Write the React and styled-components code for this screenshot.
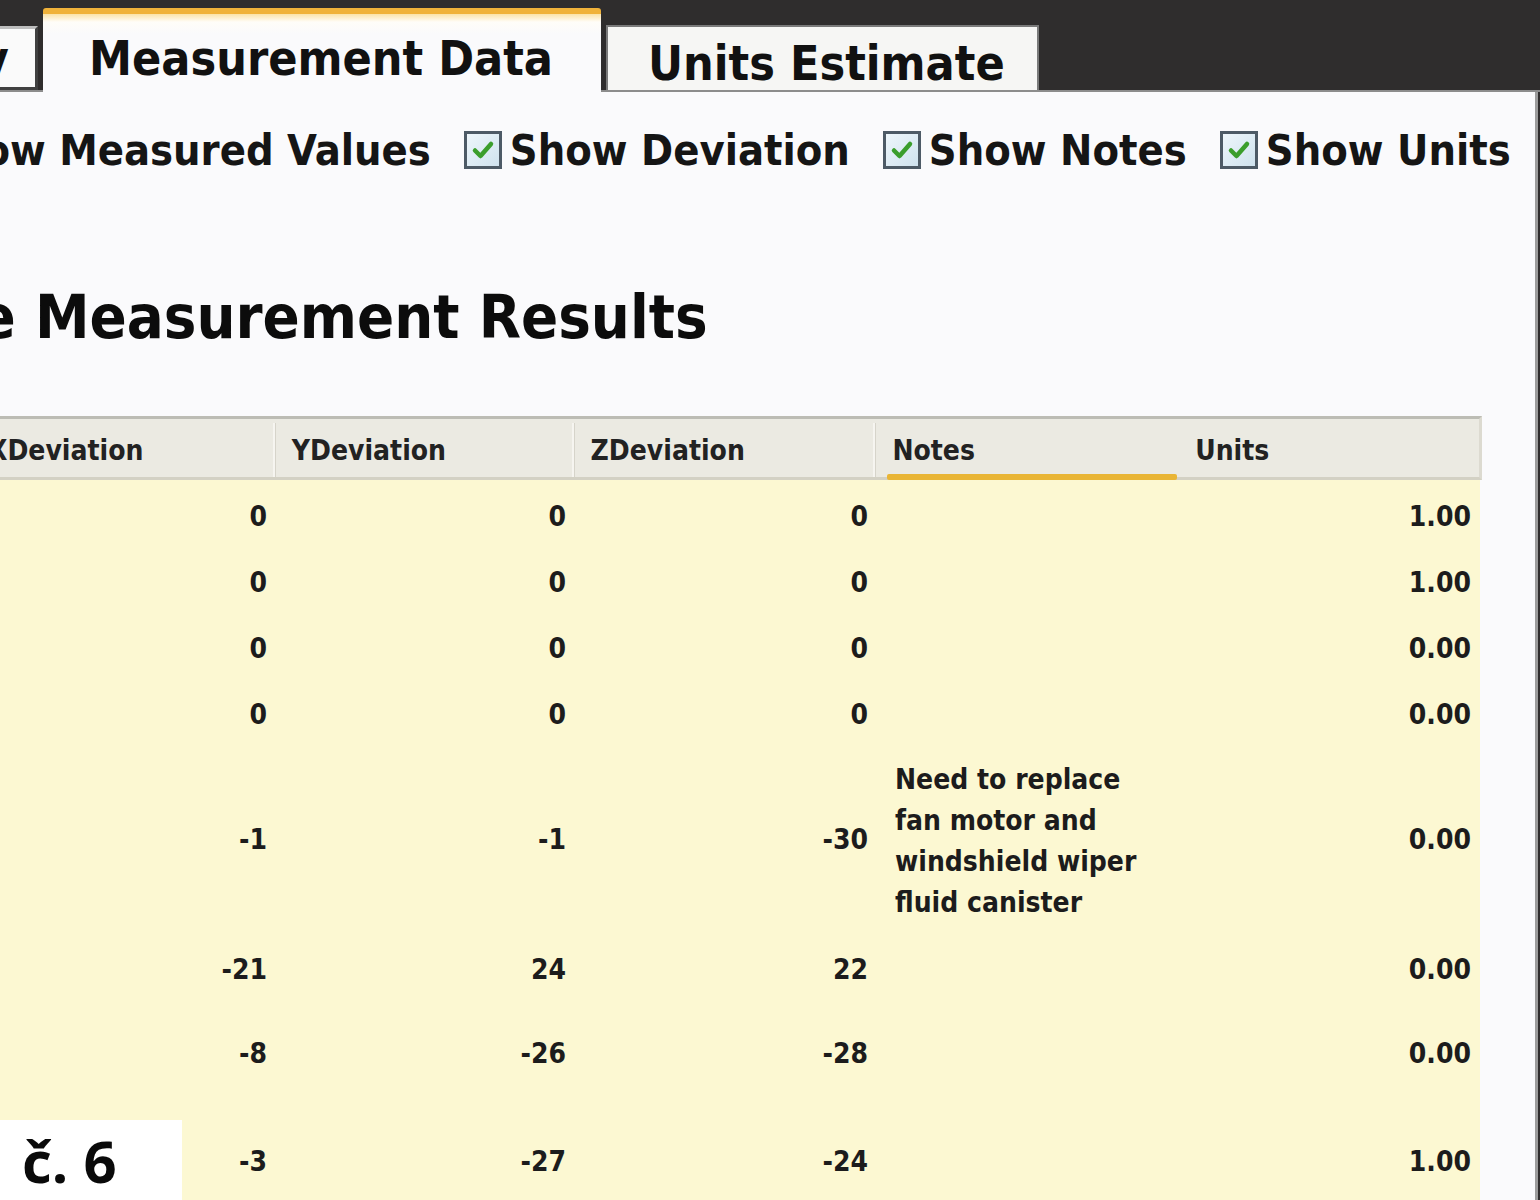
import React from 'react';
import styled, { createGlobalStyle, css } from 'styled-components';

const FONT = `"DejaVu Sans Condensed", "DejaVu Sans", "Liberation Sans", sans-serif`;

const columns = [
  { key: 'x', title: 'XDeviation', width: 304, align: 'right' },
  { key: 'y', title: 'YDeviation', width: 299, align: 'right' },
  { key: 'z', title: 'ZDeviation', width: 302, align: 'right' },
  { key: 'notes', title: 'Notes', width: 303, align: 'left', sorted: true },
  { key: 'units', title: 'Units', width: 300, align: 'right' },
];

const rows = [
  { x: '0', y: '0', z: '0', notes: '', units: '1.00', h: 66 },
  { x: '0', y: '0', z: '0', notes: '', units: '1.00', h: 66 },
  { x: '0', y: '0', z: '0', notes: '', units: '0.00', h: 66 },
  { x: '0', y: '0', z: '0', notes: '', units: '0.00', h: 66 },
  {
    x: '-1', y: '-1', z: '-30',
    notes: 'Need to replace fan motor and windshield wiper fluid canister',
    units: '0.00', h: 184,
  },
  { x: '-21', y: '24', z: '22', notes: '', units: '0.00', h: 76 },
  { x: '-8', y: '-26', z: '-28', notes: '', units: '0.00', h: 92 },
  { x: '-3', y: '-27', z: '-24', notes: '', units: '1.00', h: 124 },
];

const options = ['Show Measured Values', 'Show Deviation', 'Show Notes', 'Show Units'];

function CheckBox() {
  return (
    <StyledCheck>
      <svg width="28" height="28" viewBox="0 0 28 28">
        <path d="M6 14.5 L11.5 20 L22 8" fill="none" stroke="#3b9e2c" strokeWidth="4.5" strokeLinecap="round" strokeLinejoin="round" />
      </svg>
    </StyledCheck>
  );
}

export default function App() {
  return (
    <Screen>
      <GlobalStyle />
      <TabStrip>
        <Tab $clipped>Summary</Tab>
        <Tab $active>Measurement Data</Tab>
        <Tab>Units Estimate</Tab>
      </TabStrip>
      <Panel>
        <Options>
          {options.map((label) => (
            <Option key={label}>
              <CheckBox />
              {label}
            </Option>
          ))}
        </Options>
        <Title>Vehicle Measurement Results</Title>
        <Grid>
          <HeaderRow>
            {columns.map((col) => (
              <HeaderCell key={col.key} $width={col.width} $sorted={col.sorted}>
                {col.title}
              </HeaderCell>
            ))}
          </HeaderRow>
          {rows.map((row, i) => (
            <Row key={i} $height={row.h}>
              {columns.map((col) => (
                <Cell key={col.key} $width={col.width} $align={col.align} $notes={col.key === 'notes'}>
                  {row[col.key]}
                </Cell>
              ))}
            </Row>
          ))}
        </Grid>
      </Panel>
      <PageLabel>č. 6</PageLabel>
    </Screen>
  );
}

const GlobalStyle = createGlobalStyle`
  html, body {
    margin: 0;
    padding: 0;
    background: #fafafc;
    overflow: hidden;
  }
`;

const Screen = styled.div`
  position: relative;
  width: 1540px;
  height: 1200px;
  overflow: hidden;
  background: #2f2d2d;
  font-family: ${FONT};
  color: #151515;
`;

const TabStrip = styled.div`
  display: flex;
  align-items: flex-end;
  gap: 4px;
  height: 90px;
  border-bottom: 2px solid #8c8c8c;
`;

const Tab = styled.div`
  display: flex;
  align-items: center;
  box-sizing: border-box;
  font-weight: 700;
  font-size: 48px;
  white-space: nowrap;
  color: #111;
  height: 65px;
  padding: 8px 32px 0 40px;
  background: #f6f6f4;
  border: 2px solid #7a7a7a;
  border-bottom: none;
  margin-left: 1px;

  ${(p) => p.$clipped && css`
    width: 38px;
    margin-left: 0;
    height: 64px;
    padding: 0 26px 0 0;
    justify-content: flex-end;
    overflow: hidden;
    background: #fafafa;
    border: 3px solid #404040;
    border-left: none;
    border-top-color: #bdbdbd;
  `}

  ${(p) => p.$active && css`
    height: 84px;
    margin-bottom: -2px;
    padding: 10px 48px 0 46px;
    background: linear-gradient(#fbe3a8 0, #fffdf8 8px, #fafafc 20px);
    border: none;
    border-top: 6px solid #f0b23a;
    border-radius: 3px 3px 0 0;
  `}
`;

const Panel = styled.div`
  box-sizing: border-box;
  width: 1538px;
  height: 1108px;
  padding-top: 33px;
  background: #fafafc;
  border-right: 3px solid #9c9c9c;
  overflow: hidden;
`;

const Options = styled.div`
  display: flex;
  align-items: center;
  gap: 33px;
  height: 50px;
  margin-left: -118px;
`;

const Option = styled.label`
  display: flex;
  align-items: center;
  gap: 8px;
  font-size: 43px;
  font-weight: 700;
  white-space: nowrap;
`;

const StyledCheck = styled.span`
  display: flex;
  align-items: center;
  justify-content: center;
  box-sizing: border-box;
  width: 38px;
  height: 38px;
  border: 3px solid #4d5a66;
  background: linear-gradient(135deg, #eef6fb, #cfe2ee);
`;

const Title = styled.h1`
  margin: 107px 0 0 -207px;
  font-size: 61px;
  line-height: 70px;
  font-weight: 700;
  white-space: nowrap;
  color: #0c0c0c;
`;

const Grid = styled.div`
  margin: 64px 0 0 -28px;
  width: 1510px;
`;

const HeaderRow = styled.div`
  display: flex;
  height: 64px;
  box-sizing: border-box;
  padding-top: 4px;
  background: #ebeae2;
  border-top: 3px solid #bcbcb4;
  border-bottom: 3px solid #d3d1c4;
  border-right: 3px solid #dcdad0;
`;

const HeaderCell = styled.div`
  position: relative;
  display: flex;
  align-items: center;
  box-sizing: border-box;
  width: ${(p) => p.$width}px;
  padding-left: 16px;
  font-size: 28px;
  font-weight: 700;
  color: #222;
  border-right: 1px solid #d6d4ca;
  box-shadow: inset -2px 0 0 #f6f5f0;

  &:nth-child(4), &:last-child {
    border-right: none;
    box-shadow: none;
  }

  ${(p) => p.$sorted && css`
    &::after {
      content: '';
      position: absolute;
      left: 11px;
      right: 2px;
      bottom: -3px;
      height: 6px;
      border-radius: 2px;
      background: #e9b535;
    }
  `}
`;

const Row = styled.div`
  display: flex;
  height: ${(p) => p.$height}px;
  width: 1508px;
  background: #fcf8d2;
`;

const Cell = styled.div`
  display: flex;
  align-items: center;
  justify-content: ${(p) => (p.$align === 'right' ? 'flex-end' : 'flex-start')};
  box-sizing: border-box;
  width: ${(p) => p.$width}px;
  padding: 6px 9px 0 0;
  font-size: 28px;
  font-weight: 700;
  line-height: 41px;
  color: #1c1c1c;

  ${(p) => p.$notes && css`
    padding: 10px 40px 0 18px;
  `}
`;

const PageLabel = styled.div`
  position: absolute;
  left: 0;
  bottom: 0;
  display: flex;
  align-items: center;
  box-sizing: border-box;
  width: 182px;
  height: 80px;
  padding-left: 22px;
  background: #fff;
  font-family: "Open Sans", "Liberation Sans", sans-serif;
  font-weight: 700;
  font-size: 58px;
  color: #0a0a0a;
`;
